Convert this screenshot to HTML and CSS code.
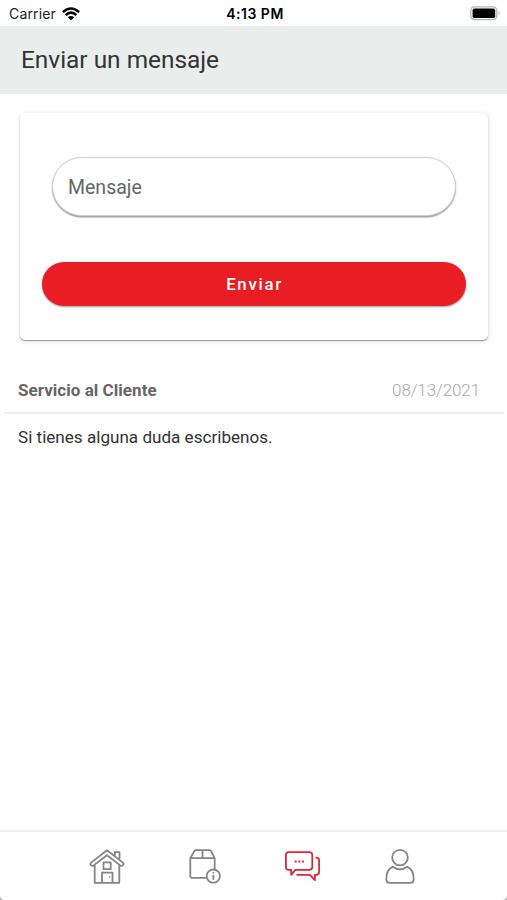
FILE: index.html
```html
<!DOCTYPE html>
<html lang="es">
<head>
<meta charset="utf-8">
<title>Enviar un mensaje</title>
<link rel="stylesheet" href="styles.css">
</head>
<body>
<div class="status">
  <div class="status-left"><span class="carrier">Carrier</span>
    <svg class="wifi" width="18" height="14" viewBox="0 0 18 14" fill="none" stroke="#000" stroke-width="2.5"><path d="M.9 5.1Q9-2.2 17.1 5.1M3.7 8Q9 3.3 14.3 8"/><path d="M5.8 10.2Q9 7.6 12.2 10.2L9 13.4z" fill="#000" stroke="none"/></svg>
  </div>
  <span class="time">4:13 PM</span>
  <svg class="battery" width="31" height="15" viewBox="0 0 31 15"><rect x=".8" y=".8" width="26" height="12.8" rx="3.6" fill="#fff" stroke="#b5b5b5" stroke-width="1.3"/><rect x="2.6" y="2.5" width="22.6" height="9.5" rx="1.8"/><path d="M28.6 5Q30.7 7.2 28.6 9.5z" fill="#aaa"/></svg>
</div>
<header class="header"><h1>Enviar un mensaje</h1></header>
<main class="content">
  <form class="card">
    <input class="field" type="text" placeholder="Mensaje" aria-label="Mensaje">
    <button class="send" type="button">Enviar</button>
  </form>
  <article class="message">
    <div class="message-head"><strong>Servicio al Cliente</strong><time>08/13/2021</time></div>
    <p>Si tienes alguna duda escribenos.</p>
  </article>
</main>
<nav class="tabs">
  <a class="tab"><svg width="36" height="38" viewBox="0 0 36 38"><path d="M18 2.2 2.1 14.6Q.8 16 2 17.2T4.7 17.4L18 7.2 31.3 17.4Q32.9 18.4 34 17.2T33.9 14.6ZM5.7 17V34.8H30.3V17M25.8 8.2V4.2H30.5V12M14.5 14.4H21.7V21.2H14.5ZM13 34.5V24.6H23.5V34.5"/><circle cx="20.6" cy="29" r=".8" fill="currentColor" stroke="none"/></svg></a>
  <a class="tab"><svg width="36" height="38" viewBox="0 0 36 38"><path d="M19 29.8H5.2Q3.3 29.8 3.3 28V10.2L7.2 3.2Q7.8 2.2 9 2.2H22.3Q23.6 2.2 24.1 3.2L27.7 10.2V21M3.3 10.2H27.7M15.5 2.2V10.2"/><circle cx="26.3" cy="28.1" r="6.6"/><path d="M26.3 27.6V31.2M26.3 24.6V24.8"/></svg></a>
  <a class="tab active"><svg width="36" height="38" viewBox="0 0 36 38"><path d="M4.6 4.2H25.4Q28.3 4.2 28.3 7.1V19Q28.3 21.8 25.4 21.8H11.4L7.2 26.8V21.8H4.6Q1.9 21.8 1.9 19V7.1Q1.9 4.2 4.6 4.2ZM32.2 9.7Q35.1 9.8 35.1 12.6V23.8Q35.1 26.8 32.2 26.8H30.9V32.2L25.9 26.8H13.1"/><path class="dots" d="M10.7 13.6h2m1.6 0h2m1.6 0h2"/></svg></a>
  <a class="tab"><svg width="36" height="38" viewBox="0 0 36 38"><circle cx="18" cy="9.6" r="7.8"/><path d="M10.7 18.8Q4.3 21.3 4.3 31.2 4.3 34.8 7.9 34.8H28.1Q31.7 34.8 31.7 31.2 31.7 21.3 25.3 18.8 18 24 10.7 18.8Z"/></svg></a>
</nav>
</body>
</html>
```

FILE: styles.css
```css
* { box-sizing: border-box; }
html { background: #b8b8b8; }
body {
  margin: 0;
  height: 900px;
  display: flex;
  flex-direction: column;
  overflow: hidden;
  background: #fefefe;
  border-radius: 0 0 5px 5px;
  font-family: Roboto, "Liberation Sans", sans-serif;
  color: #333;
}
.status {
  height: 26px;
  padding: 1px 6px 0 9px;
  display: grid;
  grid-template-columns: 1fr auto 1fr;
  align-items: center;
  font-family: Inter, sans-serif;
  font-size: 14px;
  color: #000;
}
.status-left { display: flex; align-items: center; gap: 6px; }
.carrier { color: #222; letter-spacing: .15px; }
.time { font-size: 14px; font-weight: 600; letter-spacing: .5px; }
.battery { justify-self: end; }
.header {
  height: 68px;
  padding: 0 21px 2px;
  display: flex;
  align-items: center;
  background: #e9eeed;
}
.header h1 { margin: 0; font-size: 24.4px; font-weight: 400; color: #333; }
.content { flex: 1; padding-top: 19px; }
.card {
  height: 227px;
  margin: 0 19px 0 20px;
  padding: 44px 22px 34px;
  display: flex;
  flex-direction: column;
  justify-content: space-between;
  background: #fff;
  border-radius: 5px;
  box-shadow: 0 1px 1px rgba(0, 0, 0, .36), 0 1px 5px rgba(0, 0, 0, .13);
}
.field {
  height: 59px;
  margin: 0 10px;
  padding: 2px 15px 0;
  border: 1px solid #cecece;
  border-radius: 30px;
  outline: 0;
  background: #fff;
  font: 400 19.5px Roboto, sans-serif;
  box-shadow: 0 1.5px 1px rgba(0, 0, 0, .32), 0 1px 3px rgba(0, 0, 0, .1);
}
.field::placeholder { color: #666; opacity: 1; }
.send {
  height: 44px;
  padding: 0 0 0 1px;
  border: 0;
  border-radius: 22px;
  background: #e91e25;
  color: #fff;
  font: 500 16.8px Roboto, sans-serif;
  letter-spacing: 1.7px;
  box-shadow: 0 1px 2px rgba(0, 0, 0, .4);
}
.message { padding: 28px 3px 0 4px; }
.message-head {
  height: 46px;
  padding: 0 24px 0 14px;
  display: flex;
  align-items: center;
  justify-content: space-between;
  border-bottom: 2px solid #eee;
  font-size: 17px;
}
.message strong { font-weight: 700; color: #666; letter-spacing: .04px; }
.message time { font-weight: 300; color: #aaa; letter-spacing: -.1px; }
.message p { margin: 13px 14px; font-size: 17.1px; line-height: 20px; }
.tabs {
  height: 70px;
  padding: 1px 58px 0;
  display: flex;
  align-items: center;
  background: #fff;
  border-top: 2px solid #eee;
}
.tab { flex: 1; display: flex; justify-content: center; color: #858585; }
.tab svg {
  fill: none;
  stroke: currentColor;
  stroke-width: 1.8;
  stroke-linejoin: round;
  stroke-linecap: round;
}
.tab .dots { stroke-linecap: butt; stroke-width: 2; }
.active { color: #df2635; }
```
